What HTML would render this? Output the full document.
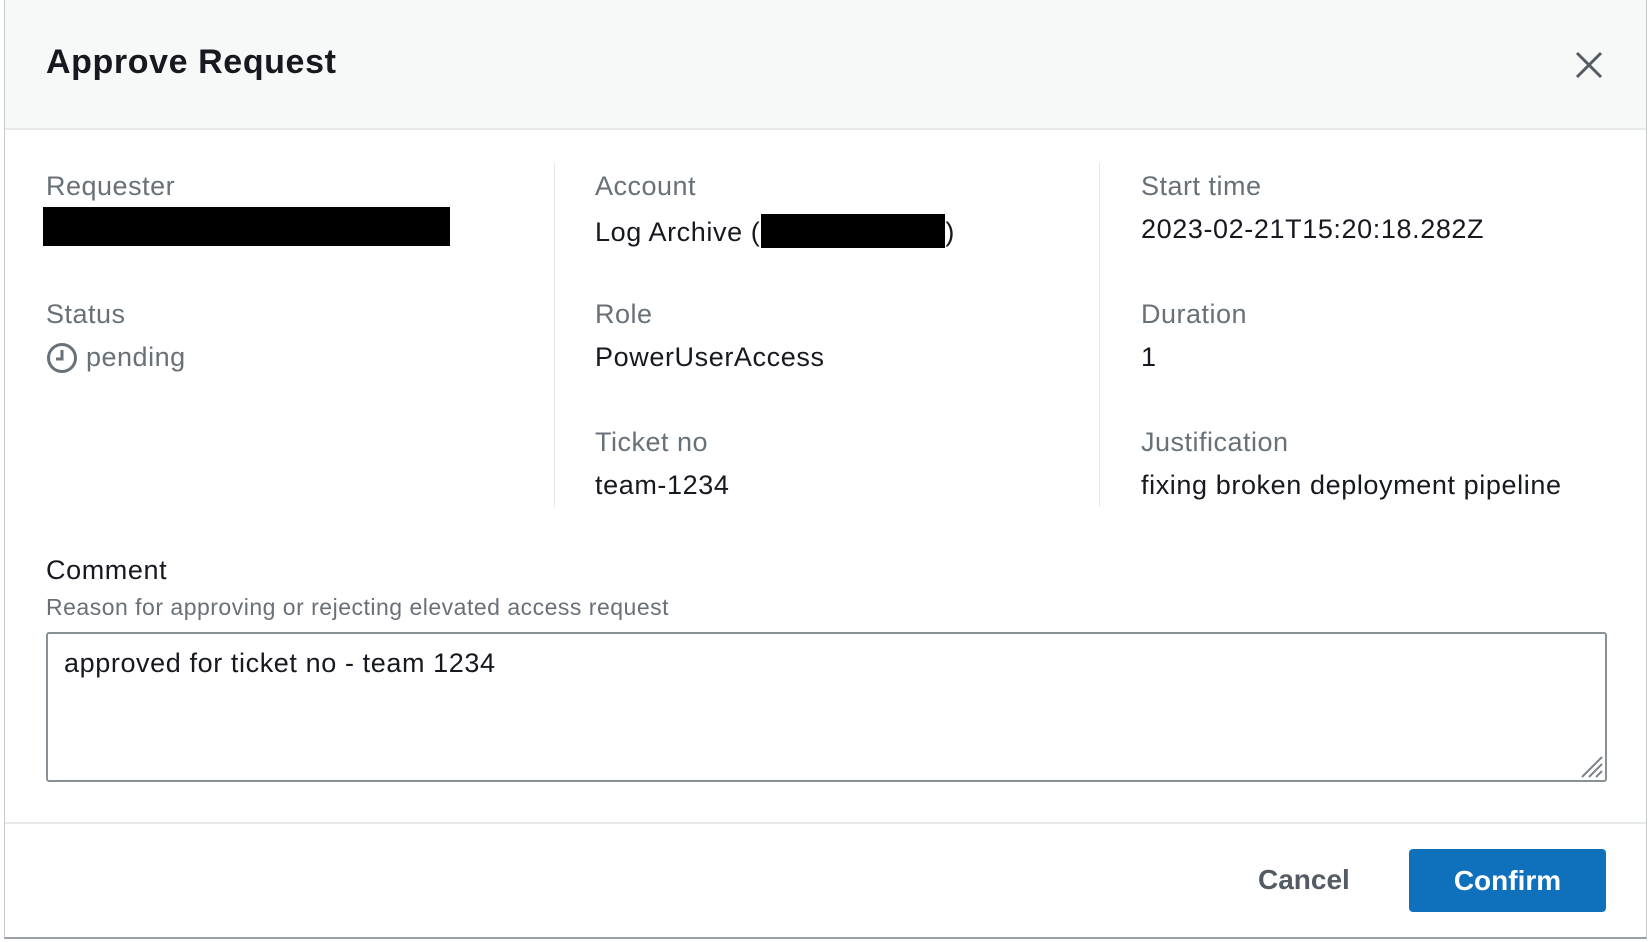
<!DOCTYPE html>
<html><head><meta charset="utf-8"><style>
*{box-sizing:border-box;margin:0;padding:0}
body{width:1648px;height:942px;background:#fff;font-family:"Liberation Sans",sans-serif;position:relative;overflow:hidden}
.modal{position:absolute;left:4px;top:0;width:1643px;height:939px;border:1px solid #c6cacb;border-top:none;border-bottom:2px solid #9aa0a6;background:#fff}
.head{position:absolute;left:0;top:0;width:100%;height:130px;background:#f7f8f8;border-bottom:2px solid #e7eaea}
.t{position:absolute;white-space:nowrap}
.title{left:41px;top:43px;font-size:34px;font-weight:bold;color:#16191f;letter-spacing:0.6px}
.lab{font-size:27px;color:#687078;letter-spacing:0.5px}
.val{font-size:27px;color:#16191f;letter-spacing:0.6px}
.div{position:absolute;width:1px;background:#e5e8e8;top:163px;height:344px}
.red{position:absolute;background:#000}
.ta{position:absolute;left:41px;top:632px;width:1561px;height:150px;border:2px solid #879196;border-radius:3px}
.foot{position:absolute;left:0;top:822px;width:100%;height:2px;background:#e7eaea}
.btn{position:absolute;left:1404px;top:849px;width:197px;height:63px;background:#0f71bb;border-radius:4px;color:#fff;font-weight:bold;font-size:28px;text-align:center;line-height:63px}
</style></head><body>
<div class="modal">
<div class="head"></div>
<div class="t title">Approve Request</div>
<svg style="position:absolute;left:1570px;top:51px" width="28" height="28" viewBox="0 0 28 28"><path d="M2 2L26 26M26 2L2 26" stroke="#545b64" stroke-width="3"/></svg>

<div class="t lab" style="left:41px;top:171px">Requester</div>
<div class="red" style="left:38px;top:207px;width:407px;height:39px"></div>
<div class="t lab" style="left:41px;top:299px">Status</div>
<svg style="position:absolute;left:41px;top:342px" width="32" height="32" viewBox="0 0 32 32"><circle cx="16" cy="16" r="13.5" fill="none" stroke="#687078" stroke-width="3"/><path d="M16 8V17H10" fill="none" stroke="#687078" stroke-width="3"/></svg>
<div class="t lab" style="left:81px;top:342px">pending</div>

<div class="div" style="left:549px"></div>
<div class="t lab" style="left:590px;top:171px">Account</div>
<div class="t val" style="left:590px;top:214px">Log Archive (<span style="display:inline-block;width:184px;height:34px;background:#000;vertical-align:-7px;margin-left:1px"></span>)</div>
<div class="t lab" style="left:590px;top:299px">Role</div>
<div class="t val" style="left:590px;top:342px">PowerUserAccess</div>
<div class="t lab" style="left:590px;top:427px">Ticket no</div>
<div class="t val" style="left:590px;top:470px">team-1234</div>

<div class="div" style="left:1094px"></div>
<div class="t lab" style="left:1136px;top:171px">Start time</div>
<div class="t val" style="left:1136px;top:214px">2023-02-21T15:20:18.282Z</div>
<div class="t lab" style="left:1136px;top:299px">Duration</div>
<div class="t val" style="left:1136px;top:342px">1</div>
<div class="t lab" style="left:1136px;top:427px">Justification</div>
<div class="t val" style="left:1136px;top:470px">fixing broken deployment pipeline</div>

<div class="t val" style="left:41px;top:555px">Comment</div>
<div class="t" style="left:41px;top:594px;font-size:23px;color:#687078;letter-spacing:0.5px">Reason for approving or rejecting elevated access request</div>
<div class="ta"></div>
<div class="t val" style="left:59px;top:648px">approved for ticket no - team 1234</div>
<svg style="position:absolute;left:1575px;top:755px" width="24" height="24" viewBox="0 0 24 24"><path d="M2 22L22 2M9 22L22 9M16 22L22 16" stroke="#7d8388" stroke-width="2"/></svg>

<div class="foot"></div>
<div class="t" style="left:1253px;top:864px;font-size:28px;font-weight:bold;color:#545b64">Cancel</div>
<div class="btn">Confirm</div>
</div>
</body></html>
